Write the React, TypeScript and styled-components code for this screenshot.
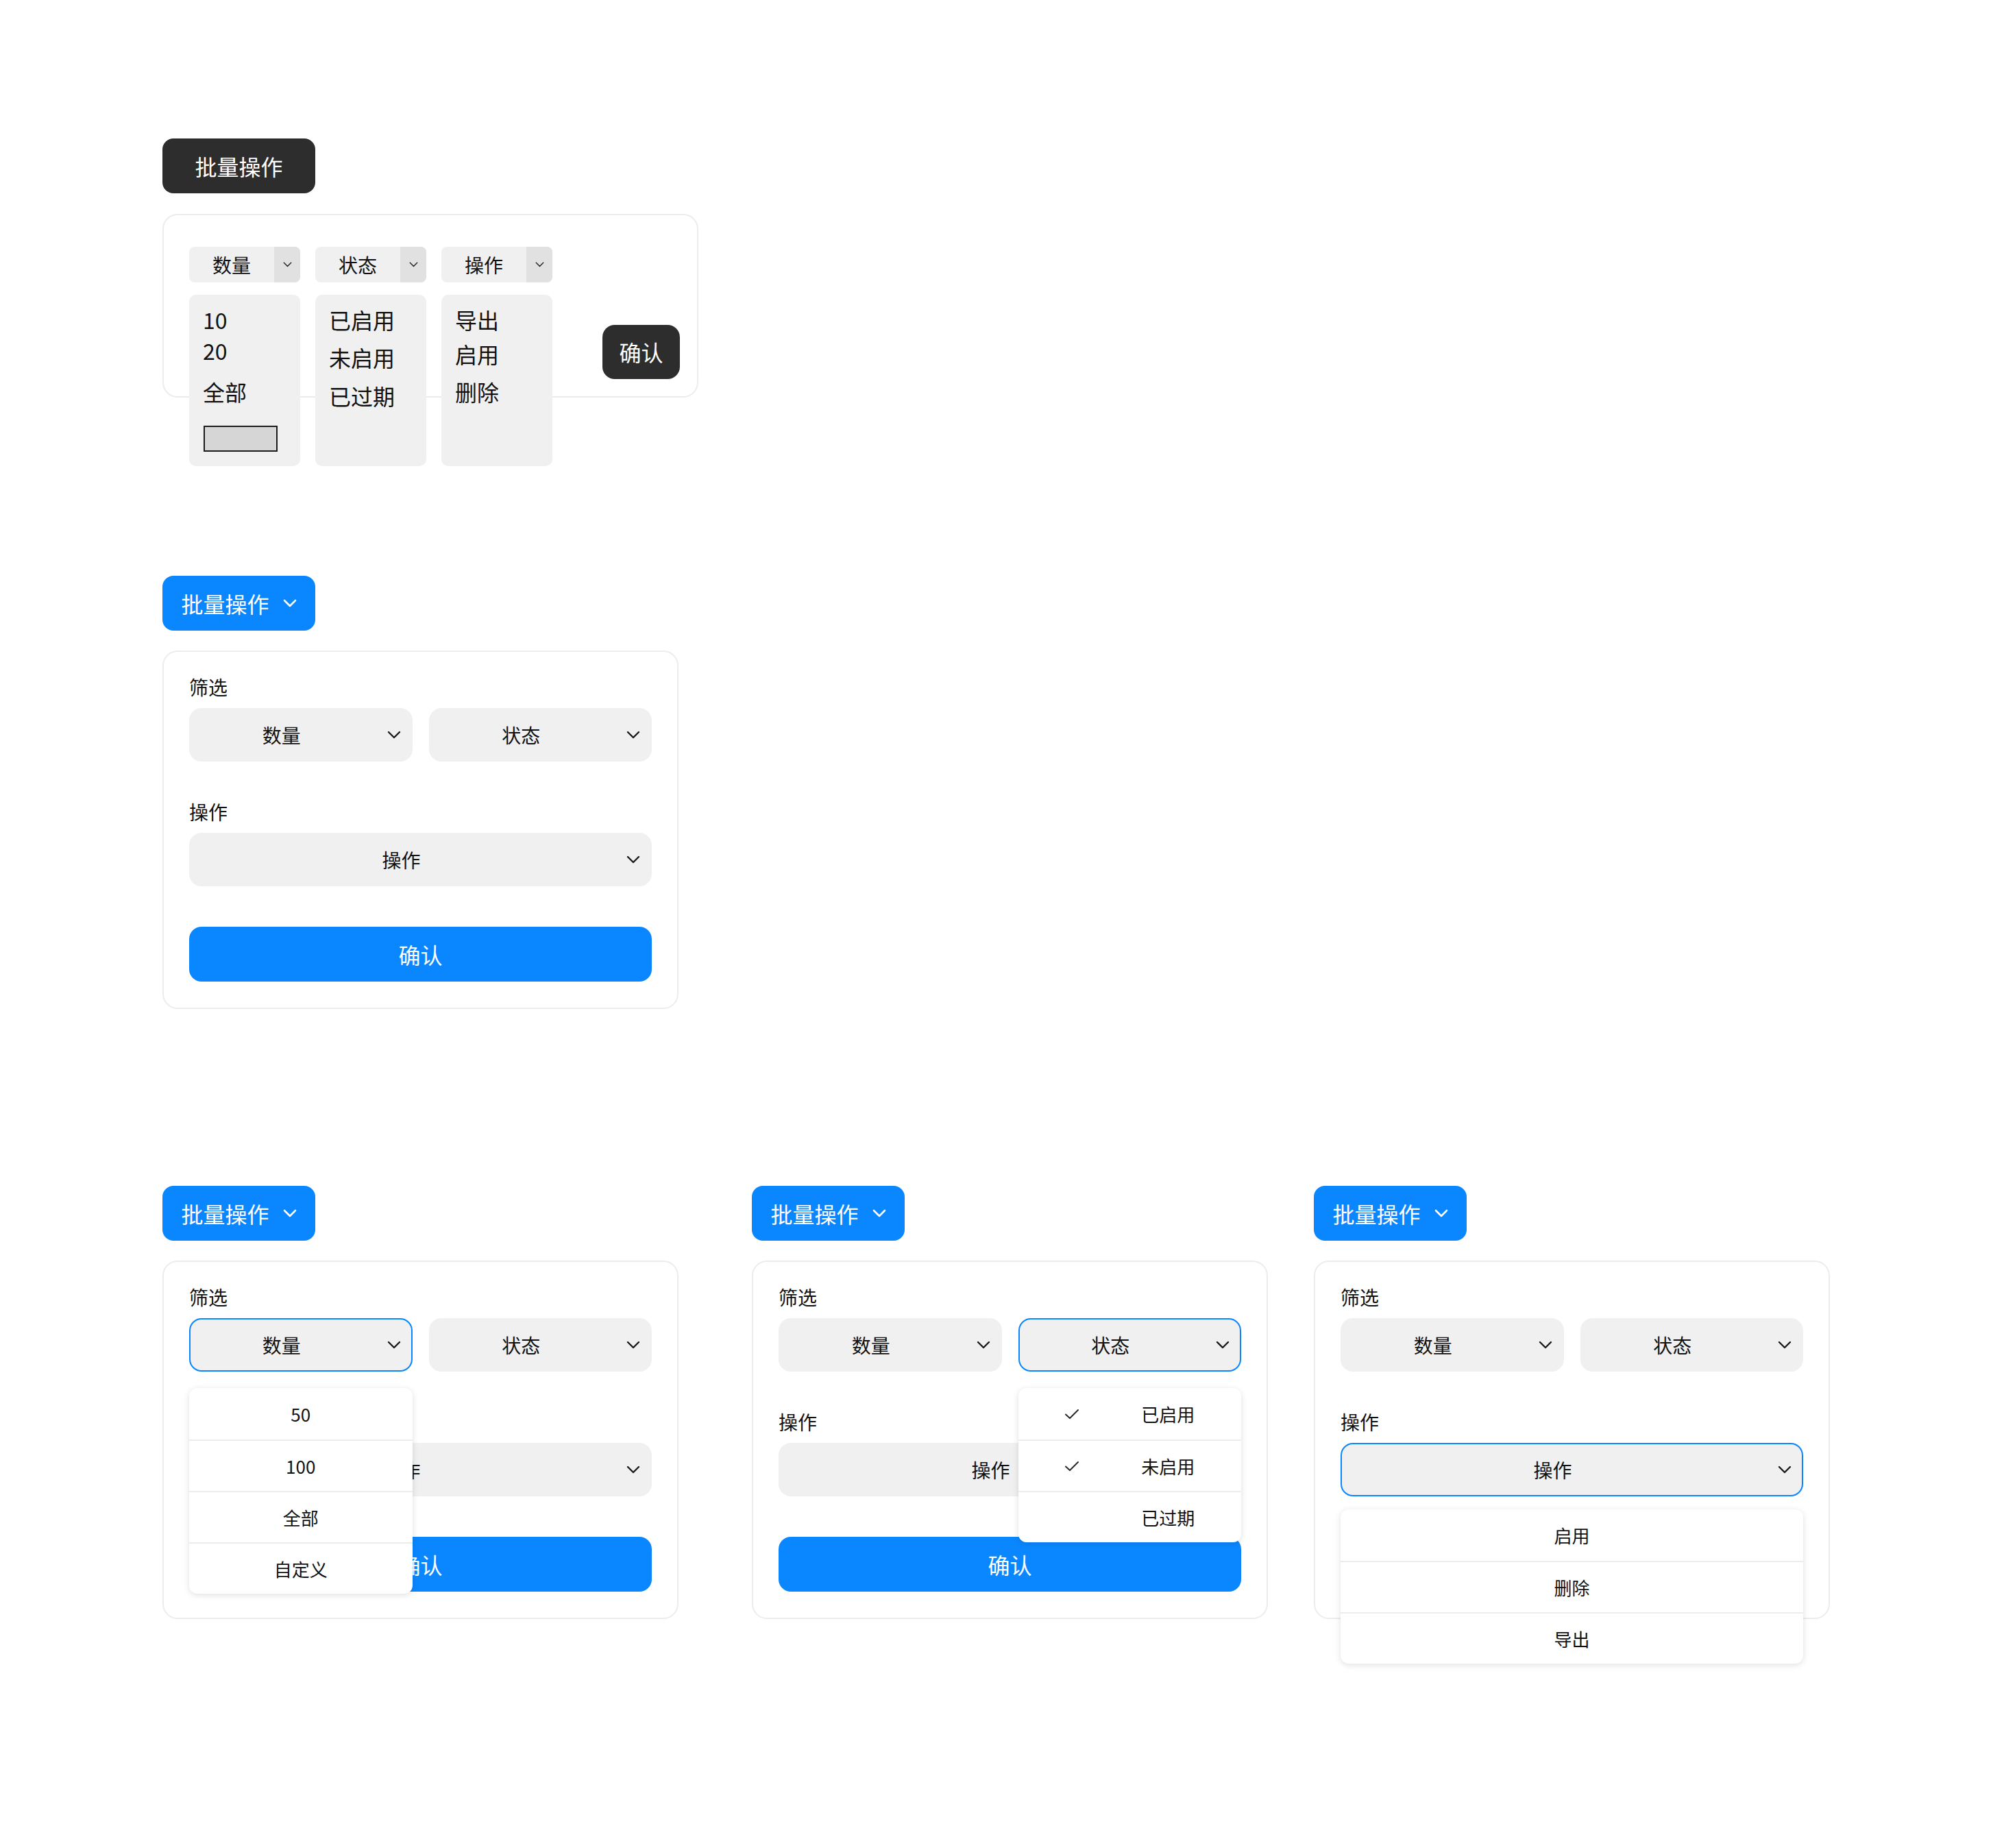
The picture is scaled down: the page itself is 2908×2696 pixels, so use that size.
import React from 'react';
import styled, { createGlobalStyle } from 'styled-components';

const GlobalStyle = createGlobalStyle`
  html, body {
    margin: 0;
    padding: 0;
    background: #ffffff;
  }
  body {
    font-family: "Noto Sans CJK SC", "Noto Sans", sans-serif;
    color: #111111;
  }
  * {
    box-sizing: border-box;
  }
`;

const BLUE = '#0a87ff';
const DARK = '#2d2d2d';

const Page = styled.div`
  padding: 202px 0 240px 237px;
`;

const Section = styled.section<{ $gap: number }>`
  margin-bottom: ${p => p.$gap}px;
`;

const HeaderButton = styled.button<{ $variant: 'dark' | 'blue' }>`
  display: flex;
  align-items: center;
  justify-content: center;
  gap: 20px;
  width: 223px;
  height: 80px;
  padding: 0;
  border: none;
  border-radius: 16px;
  font-family: inherit;
  font-size: 32px;
  line-height: 1;
  color: #ffffff;
  background: ${p => (p.$variant === 'dark' ? DARK : BLUE)};
  margin-bottom: ${p => (p.$variant === 'dark' ? 30 : 29)}px;
`;

/* ---- first (old) panel ---- */

const LegacyCard = styled.div`
  width: 782px;
  height: 268px;
  border: 2px solid #ececec;
  border-radius: 22px;
  padding: 46px 25px 0 37px;
`;

const LegacyRow = styled.div`
  display: flex;
  align-items: center;
  justify-content: space-between;
`;

const LegacyColumns = styled.div`
  display: flex;
  gap: 22px;
`;

const LegacyColumn = styled.div`
  width: 162px;
  display: flex;
  flex-direction: column;
  gap: 18px;
`;

const LegacySelect = styled.div`
  display: flex;
  height: 52px;
  border-radius: 8px;
  overflow: hidden;
  background: #f0f0f0;
`;

const LegacyValue = styled.span`
  flex: 1;
  display: flex;
  align-items: center;
  justify-content: center;
  font-size: 28px;
`;

const LegacyArrow = styled.span`
  width: 38px;
  display: flex;
  align-items: center;
  justify-content: center;
  background: #e1e1e1;
`;

const ListBox = styled.div`
  height: 250px;
  padding: 14px 20px;
  border-radius: 10px;
  background: #f0f0f0;
`;

const ListOption = styled.div<{ $mt: number }>`
  margin-top: ${p => p.$mt}px;
  font-size: 32px;
  line-height: 45px;
  white-space: nowrap;
`;

const Swatch = styled.div`
  width: 108px;
  height: 38px;
  margin: 27px 0 0 1px;
  background: #d6d6d6;
  border: 2px solid #1a1a1a;
`;

const DarkConfirm = styled.button`
  width: 113px;
  height: 79px;
  margin-bottom: 14px;
  border: none;
  border-radius: 18px;
  background: ${DARK};
  color: #ffffff;
  font-family: inherit;
  font-size: 32px;
`;

/* ---- new panel ---- */

const Card = styled.div`
  width: 753px;
  border: 2px solid #ececec;
  border-radius: 22px;
  padding: 34px 37px 38px;
`;

const Label = styled.div<{ $mt?: number }>`
  margin-top: ${p => p.$mt ?? 0}px;
  margin-bottom: 14px;
  font-size: 28px;
  line-height: 34px;
`;

const SelectRow = styled.div`
  display: grid;
  grid-template-columns: 1fr 1fr;
  gap: 24px;
`;

const SelectBox = styled.div<{ $focused?: boolean }>`
  position: relative;
  display: flex;
  align-items: center;
  height: 78px;
  border-radius: 18px;
  background: #f0f0f0;
  border: 2px solid ${p => (p.$focused ? BLUE : 'transparent')};
`;

const SelectValue = styled.span`
  flex: 1;
  text-align: center;
  font-size: 28px;
`;

const ChevronSlot = styled.span`
  display: flex;
  margin: 0 15px 0 21px;
`;

const ConfirmButton = styled.button`
  display: block;
  width: 100%;
  height: 80px;
  margin-top: 59px;
  border: none;
  border-radius: 18px;
  background: ${BLUE};
  color: #ffffff;
  font-family: inherit;
  font-size: 32px;
`;

const Menu = styled.div<{ $gap: number }>`
  position: absolute;
  z-index: 10;
  left: -2px;
  right: -2px;
  top: calc(100% + ${p => p.$gap + 2}px);
  background: #ffffff;
  border-radius: 12px;
  box-shadow: 0 2px 10px rgba(0, 0, 0, 0.13);
  overflow: hidden;
`;

const MenuItem = styled.div<{ $checkable?: boolean }>`
  display: flex;
  align-items: center;
  justify-content: center;
  height: 75px;
  padding-left: ${p => (p.$checkable ? 66 : 0)}px;
  font-size: 26px;
  & + & {
    border-top: 2px solid #ededed;
  }
`;

const CheckSlot = styled.span`
  width: 24px;
  height: 24px;
  display: flex;
`;

const MenuText = styled.span<{ $checkable?: boolean }>`
  flex: ${p => (p.$checkable ? 1 : 'none')};
  margin-left: ${p => (p.$checkable ? 22 : 0)}px;
  text-align: center;
`;

const TriGrid = styled.div`
  display: grid;
  grid-template-columns: 860px 820px 753px;
  align-items: start;
`;

/* ---- icons ---- */

function Chevron({ size, color, stroke }: { size: number; color: string; stroke: number }) {
  return (
    <svg width={size} height={size * 0.6} viewBox="0 0 20 12" fill="none">
      <polyline
        points="2,2 10,10 18,2"
        stroke={color}
        strokeWidth={stroke}
        strokeLinecap="round"
        strokeLinejoin="round"
      />
    </svg>
  );
}

function Check() {
  return (
    <svg width="24" height="24" viewBox="0 0 24 24" fill="none">
      <polyline
        points="3,12.5 9,18 21,6"
        stroke="#2a2a2a"
        strokeWidth="2"
        strokeLinecap="round"
        strokeLinejoin="round"
      />
    </svg>
  );
}

/* ---- pieces ---- */

type OpenMenu = 'none' | 'qty' | 'status' | 'op';

const qtyOptions = ['50', '100', '全部', '自定义'];
const statusOptions = [
  { text: '已启用', checked: true },
  { text: '未启用', checked: true },
  { text: '已过期', checked: false },
];
const opOptions = ['启用', '删除', '导出'];

function Select({ value, focused, children }: { value: string; focused?: boolean; children?: React.ReactNode }) {
  return (
    <SelectBox $focused={focused}>
      <SelectValue>{value}</SelectValue>
      <ChevronSlot>
        <Chevron size={20} color="#1a1a1a" stroke={2.4} />
      </ChevronSlot>
      {children}
    </SelectBox>
  );
}

function BatchPanel({ open }: { open: OpenMenu }) {
  return (
    <div>
      <HeaderButton $variant="blue">
        <span>批量操作</span>
        <Chevron size={20} color="#ffffff" stroke={2.6} />
      </HeaderButton>
      <Card>
        <Label>筛选</Label>
        <SelectRow>
          <Select value="数量" focused={open === 'qty'}>
            {open === 'qty' && (
              <Menu $gap={24}>
                {qtyOptions.map(o => (
                  <MenuItem key={o}>
                    <MenuText>{o}</MenuText>
                  </MenuItem>
                ))}
              </Menu>
            )}
          </Select>
          <Select value="状态" focused={open === 'status'}>
            {open === 'status' && (
              <Menu $gap={24}>
                {statusOptions.map(o => (
                  <MenuItem key={o.text} $checkable>
                    <CheckSlot>{o.checked && <Check />}</CheckSlot>
                    <MenuText $checkable>{o.text}</MenuText>
                  </MenuItem>
                ))}
              </Menu>
            )}
          </Select>
        </SelectRow>
        <Label $mt={56}>操作</Label>
        <Select value="操作" focused={open === 'op'}>
          {open === 'op' && (
            <Menu $gap={19}>
              {opOptions.map(o => (
                <MenuItem key={o}>
                  <MenuText>{o}</MenuText>
                </MenuItem>
              ))}
            </Menu>
          )}
        </Select>
        <ConfirmButton>确认</ConfirmButton>
      </Card>
    </div>
  );
}

function LegacyPanel() {
  const columns = [
    { title: '数量', items: [['10', 0], ['20', 0], ['全部', 15]] as [string, number][], swatch: true },
    { title: '状态', items: [['已启用', 0], ['未启用', 10], ['已过期', 11]] as [string, number][] },
    { title: '操作', items: [['导出', 0], ['启用', 5], ['删除', 10]] as [string, number][] },
  ];
  return (
    <>
      <HeaderButton $variant="dark">
        <span>批量操作</span>
      </HeaderButton>
      <LegacyCard>
        <LegacyRow>
          <LegacyColumns>
            {columns.map(col => (
              <LegacyColumn key={col.title}>
                <LegacySelect>
                  <LegacyValue>{col.title}</LegacyValue>
                  <LegacyArrow>
                    <Chevron size={13} color="#222" stroke={2.2} />
                  </LegacyArrow>
                </LegacySelect>
                <ListBox>
                  {col.items.map(([text, mt]) => (
                    <ListOption key={text} $mt={mt}>
                      {text}
                    </ListOption>
                  ))}
                  {col.swatch && <Swatch />}
                </ListBox>
              </LegacyColumn>
            ))}
          </LegacyColumns>
          <DarkConfirm>确认</DarkConfirm>
        </LegacyRow>
      </LegacyCard>
    </>
  );
}

export default function App() {
  return (
    <>
      <GlobalStyle />
      <Page>
        <Section $gap={260}>
          <LegacyPanel />
        </Section>
        <Section $gap={258}>
          <BatchPanel open="none" />
        </Section>
        <Section $gap={0}>
          <TriGrid>
            <BatchPanel open="qty" />
            <BatchPanel open="status" />
            <BatchPanel open="op" />
          </TriGrid>
        </Section>
      </Page>
    </>
  );
}
